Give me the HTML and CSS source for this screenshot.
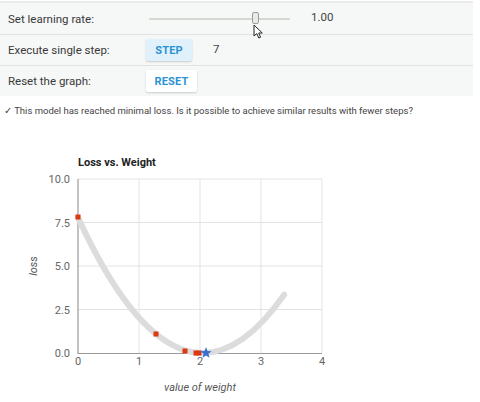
FILE: index.html
```
<!DOCTYPE html>
<html>
<head>
<meta charset="utf-8">
<link rel="stylesheet" href="styles.css">
</head>
<body>
<div class="panel">
  <div class="row">
    <div class="label">Set learning rate:</div>
    <div class="slider"><div class="track"></div><div class="thumb"></div></div>
    <div class="value">1.00</div>
  </div>
  <div class="row">
    <div class="label">Execute single step:</div>
    <button class="btn btn-step">STEP</button>
    <div class="count">7</div>
  </div>
  <div class="row last">
    <div class="label">Reset the graph:</div>
    <button class="btn btn-reset">RESET</button>
  </div>
  <svg class="cursor" width="12" height="16" viewBox="0 0 12 16"><path d="M1 1 L1 12 L3.8 9.6 L5.8 14 L7.6 13.2 L5.7 9 L9.3 9 Z" fill="#fff" stroke="#222" stroke-width="1"/></svg>
</div>
<p class="msg">✓ This model has reached minimal loss. Is it possible to achieve similar results with fewer steps?</p>
<svg class="chart" width="480" height="262" viewBox="0 140 480 262">
  <text class="title" x="78" y="167">Loss vs. Weight</text>
  <g class="grid">
    <line x1="78" y1="180" x2="322" y2="180"/>
    <line x1="78" y1="223.5" x2="322" y2="223.5"/>
    <line x1="78" y1="267" x2="322" y2="267"/>
    <line x1="78" y1="310.5" x2="322" y2="310.5"/>
    <line x1="139" y1="180" x2="139" y2="354"/>
    <line x1="200" y1="180" x2="200" y2="354"/>
    <line x1="261" y1="180" x2="261" y2="354"/>
    <line x1="322" y1="180" x2="322" y2="354"/>
  </g>
  <g class="axis">
    <line x1="78" y1="180" x2="78" y2="355"/>
    <line x1="78" y1="354.5" x2="322" y2="354.5"/>
  </g>
  <g class="ylab">
    <text x="70" y="184">10.0</text>
    <text x="70" y="227.5">7.5</text>
    <text x="70" y="271">5.0</text>
    <text x="70" y="314.5">2.5</text>
    <text x="70" y="358">0.0</text>
  </g>
  <g class="xlab">
    <text x="78" y="366">0</text>
    <text x="139" y="366">1</text>
    <text x="200" y="366">2</text>
    <text x="261" y="366">3</text>
    <text x="322" y="366">4</text>
  </g>
  <path class="curve" d="M78 218.6 Q181.1 442.9 284.2 295.6"/>
  <g class="pts">
    <rect x="75.5" y="215.5" width="5" height="5"/>
    <rect x="153.5" y="332.5" width="5" height="5"/>
    <rect x="182.5" y="349.5" width="5" height="5"/>
    <rect x="193.5" y="351.5" width="5" height="5"/>
    <rect x="196.5" y="351.5" width="5" height="5"/>
  </g>
  <polygon class="star" points="206,348 207.47,351.98 211.71,352.15 208.38,354.77 209.53,358.85 206,356.5 202.47,358.85 203.62,354.77 200.29,352.15 204.53,351.98"/>
  <text class="atitle" x="200" y="392">value of weight</text>
  <text class="atitle" transform="translate(37 267) rotate(-90)">loss</text>
</svg>
</body>
</html>
```
FILE: styles.css
```
* { box-sizing: border-box; }
html, body { margin: 0; padding: 0; background: #fff; }
body { font-family: Roboto, "Liberation Sans", sans-serif; color: #333; width: 480px; height: 402px; overflow: hidden; }

.panel {
  position: relative;
  width: 473px;
  margin-top: 1px;
  border-top: 2px solid #ebebeb;
  background: #f6f7f7;
}
.row {
  display: flex;
  align-items: center;
  height: 32px;
  border-bottom: 1px solid #e2e2e2;
  font-size: 11.5px;
}
.row + .row { height: 31px; }
.row.last { border-bottom: none; height: 30px; }
.label { width: 146px; padding-left: 8px; color: #3a3a3a; }

.slider { position: relative; width: 141px; height: 14px; margin-left: 3px; }
.track { position: absolute; left: 0; right: 0; top: 6px; height: 2px; background: #d7d7d2; border-radius: 1px; }
.thumb {
  position: absolute; left: 103px; top: 0; width: 7px; height: 12px;
  background: #e9e9e9; border: 1px solid #9a9a9a; border-radius: 2px;
}
.value { margin-left: 21px; margin-top: -4px; font-size: 11.5px; color: #444; }

.btn {
  font-family: Roboto, "Liberation Sans", sans-serif;
  font-weight: 700;
  font-size: 11px;
  color: #2a93d5;
  border: none;
  border-radius: 2px;
  height: 22px;
  padding: 0;
  box-shadow: 0 1px 2px rgba(0,0,0,0.18);
  letter-spacing: 0.2px;
}
.btn-step { width: 46px; background: #e1f1fb; }
.btn-reset { width: 51px; background: #fff; }
.count { margin-left: 21px; margin-top: -3px; font-size: 11.5px; color: #444; }

.cursor { position: absolute; left: 253px; top: 21px; }

.msg {
  margin: 8px 0 0 0;
  padding-left: 4px;
  height: 14px;
  line-height: 14px;
  font-size: 9.5px;
  color: #444;
  white-space: nowrap;
}

.chart { display: block; margin-top: 21px; }
.chart text { font-family: Roboto, "Liberation Sans", sans-serif; }
.title { font-size: 11px; font-weight: 700; fill: #222; }
.grid line { stroke: #e3e3e3; stroke-width: 1; }
.axis line { stroke: #9a9a9a; stroke-width: 1.2; }
.ylab text { font-size: 11px; fill: #666; text-anchor: end; }
.xlab text { font-size: 11px; fill: #666; text-anchor: middle; }
.curve { fill: none; stroke: #dcdcdc; stroke-width: 6; stroke-linecap: round; }
.pts rect { fill: #dc3912; }
.star { fill: #3a6fd0; }
.atitle { font-size: 11px; font-style: italic; fill: #555; text-anchor: middle; }
```
